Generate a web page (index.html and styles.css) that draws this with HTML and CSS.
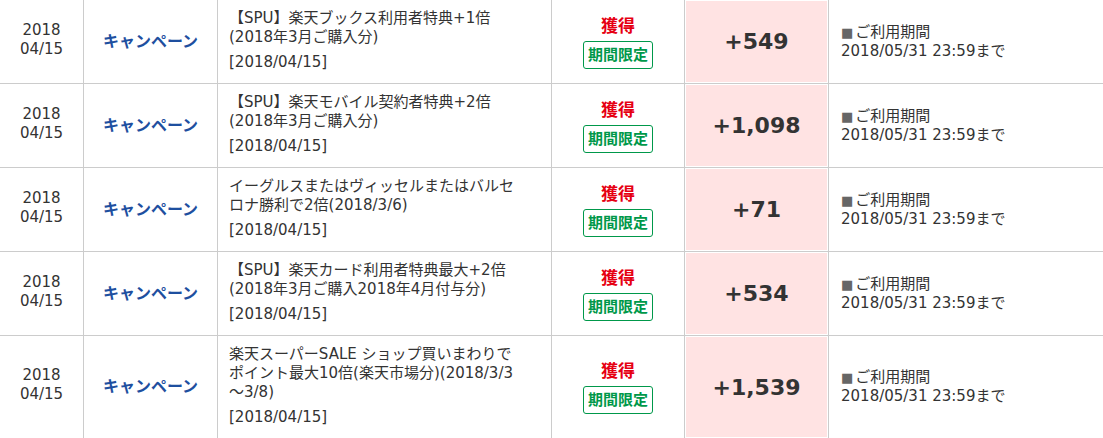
FILE: index.html
```html
<!DOCTYPE html>
<html lang="ja">
<head>
<meta charset="utf-8">
<title>ポイント履歴</title>
<link rel="stylesheet" href="styles.css">
</head>
<body>
<table class="history">
  <colgroup>
    <col class="c-date">
    <col class="c-type">
    <col class="c-desc">
    <col class="c-kind">
    <col class="c-pts">
    <col class="c-exp">
  </colgroup>
  <tbody>
    <tr>
      <td class="date">2018<br>04/15</td>
      <td class="type"><a href="#">キャンペーン</a></td>
      <td class="desc"><p class="title">【SPU】楽天ブックス利用者特典+1倍<br>(2018年3月ご購入分)</p><p class="on">[2018/04/15]</p></td>
      <td class="kind"><span class="get">獲得</span><span class="limited">期間限定</span></td>
      <td class="pts">+549</td>
      <td class="exp"><span class="sq">■</span>ご利用期間<br>2018/05/31 23:59まで</td>
    </tr>
    <tr>
      <td class="date">2018<br>04/15</td>
      <td class="type"><a href="#">キャンペーン</a></td>
      <td class="desc"><p class="title">【SPU】楽天モバイル契約者特典+2倍<br>(2018年3月ご購入分)</p><p class="on">[2018/04/15]</p></td>
      <td class="kind"><span class="get">獲得</span><span class="limited">期間限定</span></td>
      <td class="pts">+1,098</td>
      <td class="exp"><span class="sq">■</span>ご利用期間<br>2018/05/31 23:59まで</td>
    </tr>
    <tr>
      <td class="date">2018<br>04/15</td>
      <td class="type"><a href="#">キャンペーン</a></td>
      <td class="desc"><p class="title">イーグルスまたはヴィッセルまたはバルセ<br>ロナ勝利で2倍(2018/3/6)</p><p class="on">[2018/04/15]</p></td>
      <td class="kind"><span class="get">獲得</span><span class="limited">期間限定</span></td>
      <td class="pts">+71</td>
      <td class="exp"><span class="sq">■</span>ご利用期間<br>2018/05/31 23:59まで</td>
    </tr>
    <tr>
      <td class="date">2018<br>04/15</td>
      <td class="type"><a href="#">キャンペーン</a></td>
      <td class="desc"><p class="title">【SPU】楽天カード利用者特典最大+2倍<br>(2018年3月ご購入2018年4月付与分)</p><p class="on">[2018/04/15]</p></td>
      <td class="kind"><span class="get">獲得</span><span class="limited">期間限定</span></td>
      <td class="pts">+534</td>
      <td class="exp"><span class="sq">■</span>ご利用期間<br>2018/05/31 23:59まで</td>
    </tr>
    <tr>
      <td class="date">2018<br>04/15</td>
      <td class="type"><a href="#">キャンペーン</a></td>
      <td class="desc"><p class="title">楽天スーパーSALE ショップ買いまわりで<br>ポイント最大10倍(楽天市場分)(2018/3/3<br>～3/8)</p><p class="on">[2018/04/15]</p></td>
      <td class="kind"><span class="get">獲得</span><span class="limited">期間限定</span></td>
      <td class="pts">+1,539</td>
      <td class="exp"><span class="sq">■</span>ご利用期間<br>2018/05/31 23:59まで</td>
    </tr>
  </tbody>
</table>
</body>
</html>
```

FILE: styles.css
```css
html, body {
  margin: 0;
  padding: 0;
  background: #fff;
  overflow: hidden;
}

body {
  font-family: "DejaVu Sans", "Noto Sans CJK JP", sans-serif;
  font-size: 15px;
  line-height: 19px;
  color: #333;
}

.history {
  width: 1103px;
  table-layout: fixed;
  border-collapse: separate;
  border-spacing: 0;
}

.c-date { width: 84px; }
.c-type { width: 134px; }
.c-desc { width: 334px; }
.c-kind { width: 133px; }
.c-pts  { width: 144px; }
.c-exp  { width: 274px; }

.history td {
  box-sizing: border-box;
  border-right: 1px solid #ccc;
  border-bottom: 1px solid #ccc;
  vertical-align: middle;
  padding: 0;
}

.history td.exp {
  border-right: 0;
}

.date {
  text-align: center;
  padding-bottom: 4px !important;
}

.type {
  text-align: center;
}

.type a {
  color: #1e4f9f;
  font-weight: bold;
  font-size: 16px;
  text-decoration: none;
  letter-spacing: 0;
}

.desc {
  padding: 9px 20px 11px 11px !important;
  white-space: nowrap;
  overflow: hidden;
}

.desc p {
  margin: 0;
}

.desc .on {
  margin-top: 6px;
}

.kind {
  text-align: center;
}

.get {
  display: block;
  color: #e60012;
  font-weight: bold;
  font-size: 17px;
  line-height: 22px;
  margin-bottom: 4px;
}

.limited {
  display: inline-block;
  color: #00984a;
  font-weight: bold;
  font-size: 15px;
  line-height: 18px;
  padding: 4px 4px;
  border: 1px solid #00984a;
  border-radius: 3px;
}

.pts {
  background: #ffe3e3;
  box-shadow: inset 0 0 0 1px #fff;
  text-align: center;
  font-weight: bold;
  font-size: 22px;
  color: #333;
}

.exp {
  padding: 0 0 0 12px !important;
}

.sq {
  color: #666;
  font-size: 13px;
  margin-right: 2px;
}
```
